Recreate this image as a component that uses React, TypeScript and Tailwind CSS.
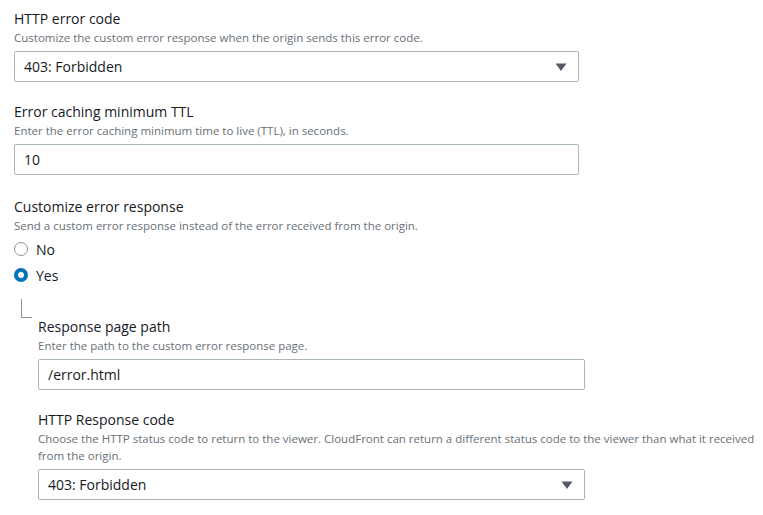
const Caret = () => (
  <svg width="12" height="9" viewBox="0 0 12 9" className="absolute right-[11px] top-1/2 -translate-y-1/2">
    <path d="M0.5 1 L11.5 1 L6 8.5 Z" fill="#545b64" />
  </svg>
);

const Field = ({ label, desc, children }: { label: string; desc: React.ReactNode; children: React.ReactNode }) => (
  <div className="flex flex-col">
    <div className="text-[14px] leading-[20px] text-[#16191f]">{label}</div>
    <div className="text-[11.5px] leading-[17px] text-[#687078]">{desc}</div>
    <div className="mt-[5px]">{children}</div>
  </div>
);

const Select = ({ value, width }: { value: string; width: string }) => (
  <div className={`relative h-[31px] ${width} rounded-[2px] border border-[#aab7b8] bg-white pl-[9px] text-[14px] leading-[29px] text-[#16191f]`}>
    {value}
    <Caret />
  </div>
);

const Input = ({ value, width }: { value: string; width: string }) => (
  <div className={`h-[31px] ${width} rounded-[2px] border border-[#aab7b8] bg-white pl-[9px] text-[14px] leading-[29px] text-[#16191f]`}>
    {value}
  </div>
);

const Radio = ({ label, checked }: { label: string; checked?: boolean }) => (
  <div className="flex h-[26px] items-center">
    <span
      className={
        checked
          ? 'h-[14px] w-[14px] shrink-0 rounded-full border-[4px] border-[#0073bb] bg-white'
          : 'h-[14px] w-[14px] shrink-0 rounded-full border-[1.5px] border-[#8d9499] bg-white'
      }
    />
    <span className="ml-[8px] text-[14px] text-[#16191f]">{label}</span>
  </div>
);

export default function App() {
  return (
    <div
      className="h-[515px] w-[763px] overflow-hidden bg-white pl-[14px] pt-[9px]"
      style={{ fontFamily: '"Open Sans", "Noto Sans", sans-serif' }}
    >
      <Field label="HTTP error code" desc="Customize the custom error response when the origin sends this error code.">
        <Select value="403: Forbidden" width="w-[565px]" />
      </Field>

      <div className="mt-[20px]">
        <Field label="Error caching minimum TTL" desc="Enter the error caching minimum time to live (TTL), in seconds.">
          <Input value="10" width="w-[565px]" />
        </Field>
      </div>

      <div className="mt-[22px]">
        <div className="text-[14px] leading-[20px] text-[#16191f]">Customize error response</div>
        <div className="text-[11.5px] leading-[17px] text-[#687078]">
          Send a custom error response instead of the error received from the origin.
        </div>
        <div className="mt-[2px] flex flex-col">
          <Radio label="No" />
          <Radio label="Yes" checked />
        </div>
      </div>

      <div className="flex">
        <div className="ml-[7px] mt-[11px] h-[19px] w-[11px] shrink-0 border-b border-l border-[#879596]" />
        <div className="ml-[6px] mt-[29px] flex flex-col whitespace-nowrap">
          <Field label="Response page path" desc="Enter the path to the custom error response page.">
            <Input value="/error.html" width="w-[547px]" />
          </Field>
          <div className="mt-[20px]">
            <Field
              label="HTTP Response code"
              desc={
                <>
                  Choose the HTTP status code to return to the viewer. CloudFront can return a different status code to the viewer than what it received
                  <br />
                  from the origin.
                </>
              }
            >
              <Select value="403: Forbidden" width="w-[547px]" />
            </Field>
          </div>
        </div>
      </div>
    </div>
  );
}
